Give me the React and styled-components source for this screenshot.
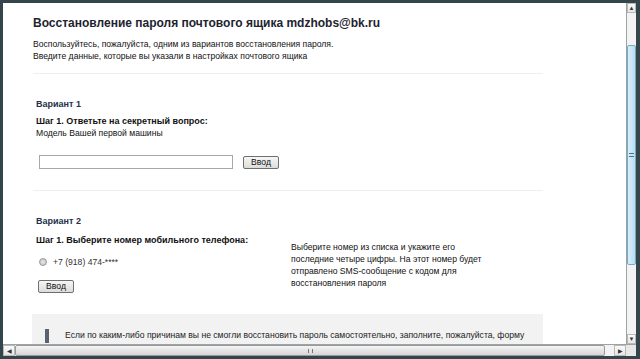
import React from "react";
import styled, { createGlobalStyle } from "styled-components";

const Global = createGlobalStyle`
  html, body {
    margin: 0;
    padding: 0;
    background: #34454c;
  }
  * { box-sizing: border-box; }
`;

const Frame = styled.div`
  width: 640px;
  height: 359px;
  background: #34454c;
  padding: 3px 4px 3px 3px;
  display: flex;
  flex-direction: column;
  overflow: hidden;
`;

const Body = styled.div`
  flex: 1;
  display: flex;
  min-height: 0;
`;

const Viewport = styled.div`
  flex: 1;
  background: #fff;
  overflow: hidden;
  padding: 12px 0 0 30px;
  font-family: "Liberation Sans", Arial, sans-serif;
  font-size: 8.6px;
  line-height: 12px;
  color: #111;
`;

const Column = styled.div`
  width: 510px;
`;

const Title = styled.h1`
  margin: 0;
  font-size: 12px;
  line-height: 16px;
  font-weight: bold;
  color: #1d2330;
`;

const Intro = styled.p`
  margin: 7px 0 0;
`;

const Divider = styled.div`
  height: 1px;
  background: #eeeeee;
  margin-top: ${(p) => p.$top}px;
`;

const Option = styled.div`
  padding-left: 3px;
  margin-top: 24px;
`;

const OptionName = styled.div`
  font-weight: bold;
  font-size: 9px;
  color: #233149;
`;

const Step = styled.div`
  font-weight: bold;
  font-size: 9px;
  margin-top: ${(p) => (p.$flush ? 0 : 5)}px;
`;

const AnswerRow = styled.div`
  display: flex;
  align-items: center;
  gap: 10px;
  margin-top: 16px;
  padding-left: 6px;
`;

const TextInput = styled.div`
  width: 194px;
  height: 14px;
  border: 1px solid #a8a8a8;
  background: #fff;
`;

const Button = styled.div`
  width: ${(p) => p.$w}px;
  height: 13px;
  border: 1px solid #6f6f6f;
  border-radius: 2px;
  background: linear-gradient(#f6f6f6, #dcdcdc);
  font-size: 8.6px;
  line-height: 11px;
  text-align: center;
  color: #111;
`;

const PhoneGrid = styled.div`
  display: grid;
  grid-template-columns: 255px 1fr;
  margin-top: 7px;
`;

const PhoneNote = styled.div`
  padding-top: 7px;
  width: 200px;
`;

const PhoneRow = styled.div`
  display: flex;
  align-items: center;
  gap: 6px;
  margin-top: 10px;
  padding-left: 3px;
  color: #333;
`;

const Radio = styled.span`
  width: 8px;
  height: 8px;
  border-radius: 50%;
  border: 1px solid #9a9a9a;
  background: radial-gradient(#e8e8e8, #bdbdbd);
`;

const SendWrap = styled.div`
  margin-top: 12px;
  padding-left: 2px;
`;

const Notice = styled.div`
  margin-top: 21px;
  margin-left: -1px;
  background: #f2f2f2;
  height: 40px;
  padding: 15px 0 0 13px;
  display: flex;
  gap: 16px;
  font-size: 8.6px;
  white-space: nowrap;
  color: #222;
`;

const NoticeBar = styled.span`
  width: 4px;
  height: 14px;
  flex-shrink: 0;
  background: #5a6470;
`;

const VScroll = styled.div`
  width: 10px;
  display: flex;
  flex-direction: column;
  background: #f3f3f3;
  border-left: 1px solid #9aa4a8;
`;

const Arrow = styled.div`
  width: ${(p) => (p.$h ? "12px" : "100%")};
  height: ${(p) => (p.$h ? "100%" : "10px")};
  flex-shrink: 0;
  display: flex;
  align-items: center;
  justify-content: center;
  background: linear-gradient(#fafafa, #e6e6e6);
  border: 1px solid #b9b9b9;
  font-size: 6px;
  line-height: 1;
  color: #333;
`;

const VThumb = styled.div`
  margin-top: ${(p) => p.$top}px;
  height: ${(p) => p.$len}px;
  background: linear-gradient(90deg, #d9eefa, #b8def3);
  border: 1px solid #78a9c2;
  border-radius: 2px;
  display: flex;
  align-items: center;
  justify-content: center;
`;

const Grip = styled.span`
  width: 5px;
  height: 4px;
  border-top: 1px solid #47708a;
  border-bottom: 1px solid #47708a;
`;

const Spacer = styled.div`
  flex: 1;
`;

const HScroll = styled.div`
  height: 12px;
  display: flex;
  background: #f3f3f3;
  border-top: 1px solid #9aa4a8;
`;

const HThumb = styled.div`
  width: 590px;
  height: 100%;
  background: linear-gradient(#f4f4f4, #d6d6d6);
  border: 1px solid #9a9a9a;
  border-radius: 2px;
  display: flex;
  align-items: center;
  justify-content: center;
`;

const HGrip = styled.span`
  width: 5px;
  height: 4px;
  border-left: 1px solid #777;
  border-right: 1px solid #777;
`;

const Corner = styled.div`
  width: 10px;
  background: #e8e8e8;
`;

export default function App() {
  return (
    <>
      <Global />
      <Frame>
        <Body>
          <Viewport>
            <Column>
              <Title>Восстановление пароля почтового ящика mdzhobs@bk.ru</Title>
              <Intro>
                Воспользуйтесь, пожалуйста, одним из вариантов восстановления пароля.
                <br />
                Введите данные, которые вы указали в настройках почтового ящика
              </Intro>
              <Divider $top={11} />

              <Option>
                <OptionName>Вариант 1</OptionName>
                <Step>Шаг 1. Ответьте на секретный вопрос:</Step>
                <div>Модель Вашей первой машины</div>
              </Option>
              <AnswerRow>
                <TextInput />
                <Button $w={36}>Ввод</Button>
              </AnswerRow>
              <Divider $top={21} />

              <Option>
                <OptionName>Вариант 2</OptionName>
                <PhoneGrid>
                  <div>
                    <Step $flush>Шаг 1. Выберите номер мобильного телефона:</Step>
                    <PhoneRow>
                      <Radio />
                      +7 (918) 474-****
                    </PhoneRow>
                    <SendWrap>
                      <Button $w={36}>Ввод</Button>
                    </SendWrap>
                  </div>
                  <PhoneNote>
                    Выберите номер из списка и укажите его последние четыре
                    цифры. На этот номер будет отправлено SMS-сообщение с кодом
                    для восстановления пароля
                  </PhoneNote>
                </PhoneGrid>
              </Option>

              <Notice>
                <NoticeBar />
                Если по каким-либо причинам вы не смогли восстановить пароль
                самостоятельно, заполните, пожалуйста, форму
              </Notice>
            </Column>
          </Viewport>
          <VScroll>
            <Arrow>▲</Arrow>
            <VThumb $top={32} $len={220}>
              <Grip />
            </VThumb>
            <Spacer />
            <Arrow>▼</Arrow>
          </VScroll>
        </Body>
        <HScroll>
          <Arrow $h>◀</Arrow>
          <HThumb>
            <HGrip />
          </HThumb>
          <Spacer />
          <Arrow $h>▶</Arrow>
          <Corner />
        </HScroll>
      </Frame>
    </>
  );
}
